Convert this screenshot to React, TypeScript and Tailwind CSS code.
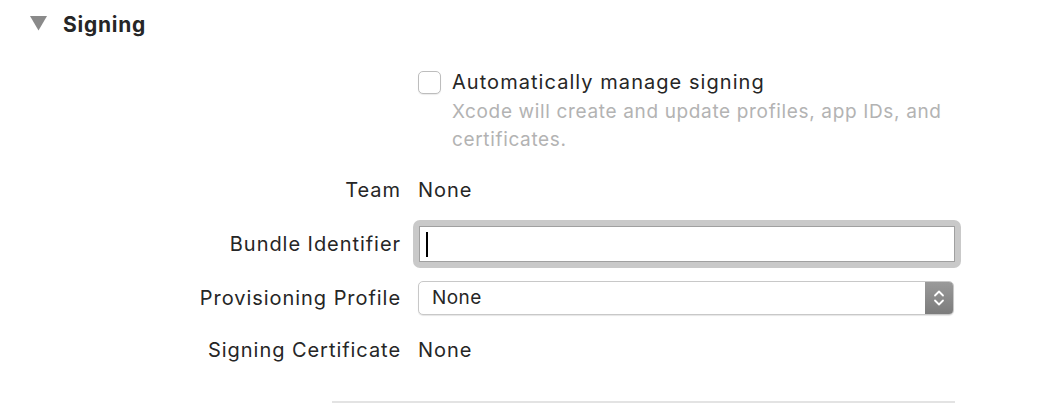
import React from "react";

const font = { fontFamily: "Inter, 'Noto Sans', sans-serif" };

function Row({
  label,
  className,
  children,
}: {
  label: string;
  className?: string;
  children: React.ReactNode;
}) {
  return (
    <div className={"flex items-center " + (className || "")}>
      <div className="mr-[-1px] w-[401px] shrink-0 text-right text-[20px] tracking-[0.95px] text-[#262626]">
        {label}
      </div>
      <div className="ml-[18px] flex w-[537px] items-center">{children}</div>
    </div>
  );
}

export default function App() {
  return (
    <div
      className="h-[404px] w-[1062px] overflow-hidden bg-white text-[#262626]"
      style={font}
    >
      <div className="flex h-[48px] items-center pl-[30px]">
        <svg width="17" height="15" viewBox="0 0 17 15" className="mb-[1px]">
          <polygon points="0,0 17,0 8.5,14.5" fill="#8a8a8a" />
        </svg>
        <span className="ml-[16px] text-[21px] font-bold leading-none tracking-[0.75px]">
          Signing
        </span>
      </div>

      <div className="ml-[418px] mt-[22px] w-[560px]">
        <div className="flex h-[24px] items-center">
          <div className="h-[23px] w-[23px] rounded-[5px] border border-[#bdbdbd] bg-white shadow-[0_1px_1px_rgba(0,0,0,0.08)]" />
          <span className="ml-[11px] text-[20px] leading-[24px] tracking-[1.05px]">
            Automatically manage signing
          </span>
        </div>
        <p className="ml-[34px] mt-[4px] text-[19px] leading-[28px] tracking-[0.65px] text-[#b3b3b3]">
          Xcode will create and update profiles, app IDs, and
          <br />
          certificates.
        </p>
      </div>

      <Row label="Team" className="mt-[22px] h-[28px]">
        <span className="text-[20px] tracking-[0.95px]">None</span>
      </Row>

      <Row label="Bundle Identifier" className="mt-[16px] h-[48px]">
        <div className="-ml-[5px] w-[548px] shrink-0 rounded-[7px] bg-[#c9c9c9] p-[6px]">
          <div className="flex h-[36px] items-center border border-[#a0a0a0] bg-white pl-[6px]">
            <div className="h-[25px] w-[2px] bg-black" />
          </div>
        </div>
      </Row>

      <Row label="Provisioning Profile" className="mt-[13px] h-[34px]">
        <div className="flex h-[34px] w-[536px] shrink-0 overflow-hidden rounded-[5px] border border-[#c8c8c8] bg-white shadow-[0_1px_1px_rgba(0,0,0,0.1)]">
          <span className="flex-1 pl-[13px] text-[19px] leading-[32px] tracking-[0.4px]">
            None
          </span>
          <div className="flex w-[28px] items-center justify-center bg-gradient-to-b from-[#9a9a9a] to-[#7c7c7c]">
            <svg width="12" height="20" viewBox="0 0 12 20">
              <path
                d="M2 7.5 L6 3.5 L10 7.5 M2 12.5 L6 16.5 L10 12.5"
                fill="none"
                stroke="white"
                strokeWidth="1.8"
                strokeLinecap="round"
                strokeLinejoin="round"
              />
            </svg>
          </div>
        </div>
      </Row>

      <Row label="Signing Certificate" className="mt-[21px] h-[28px]">
        <span className="text-[20px] tracking-[0.95px]">None</span>
      </Row>

      <div className="ml-[332px] mt-[37px] h-[2px] w-[623px] bg-[#e3e3e3]" />
    </div>
  );
}
